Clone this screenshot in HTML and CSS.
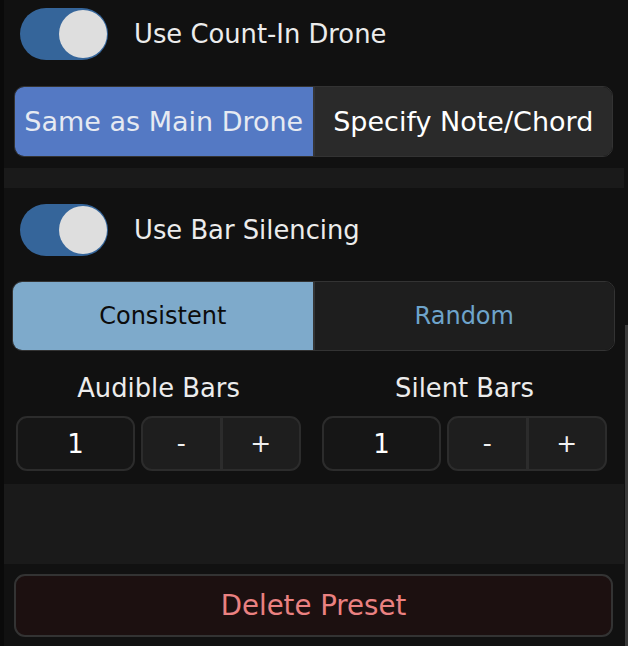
FILE: index.html
```html
<!DOCTYPE html>
<html lang="en">
<head>
  <meta charset="UTF-8">
  <title>Preset Settings</title>
  <meta name="viewport" content="width=device-width, initial-scale=1.0">
  <link rel="stylesheet" href="styles.css">
</head>
<body>
  <div class="panel">
    <div class="section section-drone">
      <div class="toggle-row">
        <span class="switch on"><span class="knob"></span></span>
        <span class="toggle-label">Use Count-In Drone</span>
      </div>
      <div class="segmented seg-drone">
        <button class="seg active">Same as Main Drone</button>
        <button class="seg">Specify Note/Chord</button>
      </div>
    </div>

    <div class="band"></div>

    <div class="section section-silence">
      <div class="toggle-row">
        <span class="switch on"><span class="knob"></span></span>
        <span class="toggle-label">Use Bar Silencing</span>
      </div>
      <div class="segmented seg-mode">
        <button class="seg active">Consistent</button>
        <button class="seg">Random</button>
      </div>
      <div class="steppers">
        <div class="stepper-col">
          <div class="stepper-title">Audible Bars</div>
          <div class="stepper">
            <div class="stepper-value">1</div>
            <div class="stepper-btns">
              <button>-</button>
              <button>+</button>
            </div>
          </div>
        </div>
        <div class="stepper-col">
          <div class="stepper-title">Silent Bars</div>
          <div class="stepper">
            <div class="stepper-value">1</div>
            <div class="stepper-btns">
              <button>-</button>
              <button>+</button>
            </div>
          </div>
        </div>
      </div>
    </div>

    <div class="band band-tall"></div>

    <div class="footer">
      <button class="delete-btn">Delete Preset</button>
    </div>
  </div>
  <div class="scrollbar"></div>
</body>
</html>
```

FILE: styles.css
```css
* { box-sizing: border-box; margin: 0; padding: 0; }

body {
  font-family: "DejaVu Sans", Verdana, sans-serif;
  background: #111;
  color: #e8e8e8;
  width: 628px;
  height: 646px;
  overflow: hidden;
  position: relative;
}

button {
  font-family: inherit;
  border: none;
  background: none;
  color: inherit;
  cursor: pointer;
}

.panel {
  border-left: 4px solid #0a0a0a;
  height: 646px;
}

.section {
  padding-right: 4px;
}

.section-drone {
  padding-top: 8px;
  padding-bottom: 11px;
}

.section-silence {
  padding-top: 16px;
  padding-bottom: 13px;
}

/* toggle */
.toggle-row {
  display: flex;
  align-items: center;
  gap: 26px;
  padding-left: 16px;
  height: 52px;
}

.switch {
  width: 88px;
  height: 52px;
  border-radius: 26px;
  background: #35659a;
  display: flex;
  align-items: center;
  justify-content: flex-end;
  padding-right: 1px;
}

.knob {
  width: 48px;
  height: 48px;
  border-radius: 50%;
  background: #dedede;
}

.toggle-label {
  font-size: 25.8px;
  color: #ececec;
}

/* segmented */
.segmented {
  display: flex;
  border: 1px solid #333;
  border-radius: 10px;
  overflow: hidden;
}

.seg {
  flex: 1;
}

.seg + .seg {
  border-left: 2px solid #353535;
}

.seg-drone {
  margin: 26px 11px 0 10px;
  height: 71px;
}

.seg-drone .seg {
  font-size: 27px;
  background: #2a2a2a;
  color: #fff;
}

.seg-drone .seg.active {
  background: #5479c4;
  color: #e6eaf2;
}

.seg-mode {
  margin: 25px 9px 0 8px;
  height: 70px;
}

.seg-mode .seg {
  font-size: 24px;
  background: #1e1e1e;
  color: #6ea4cb;
}

.seg-mode .seg.active {
  background: #7eaacb;
  color: #0c0c0c;
}

/* steppers */
.steppers {
  display: flex;
  gap: 21px;
  padding-left: 12px;
  margin-top: 23px;
}

.stepper-col {
  width: 285px;
}

.stepper-title {
  text-align: center;
  font-size: 25.8px;
  line-height: 28px;
  color: #ececec;
  margin-bottom: 14px;
}

.stepper {
  display: flex;
  gap: 6px;
  height: 55px;
}

.stepper-value {
  width: 119px;
  background: #161616;
  border: 2px solid #2c2c2c;
  border-radius: 11px;
  display: flex;
  align-items: center;
  justify-content: center;
  font-size: 26px;
  color: #fff;
}

.stepper-btns {
  flex: 1;
  display: flex;
  background: #1e1e1e;
  border: 2px solid #2c2c2c;
  border-radius: 11px;
  overflow: hidden;
}

.stepper-btns button {
  flex: 1;
  font-size: 25px;
  color: #f0f0f0;
}

.stepper-btns button + button {
  border-left: 3px solid #2c2c2c;
}

/* bands */
.band {
  height: 20px;
  background: #1a1a1a;
  margin-right: 4px;
}

.band-tall {
  height: 80px;
}

.footer {
  padding: 10px 15px 0 10px;
}

.delete-btn {
  width: 100%;
  height: 63px;
  background: #1c1010;
  border: 2px solid #333;
  border-radius: 11px;
  color: #ea8181;
  font-size: 27.6px;
}

.scrollbar {
  position: absolute;
  right: 0;
  top: 325px;
  bottom: 0;
  width: 3px;
  background: #3a3a3a;
}
```
